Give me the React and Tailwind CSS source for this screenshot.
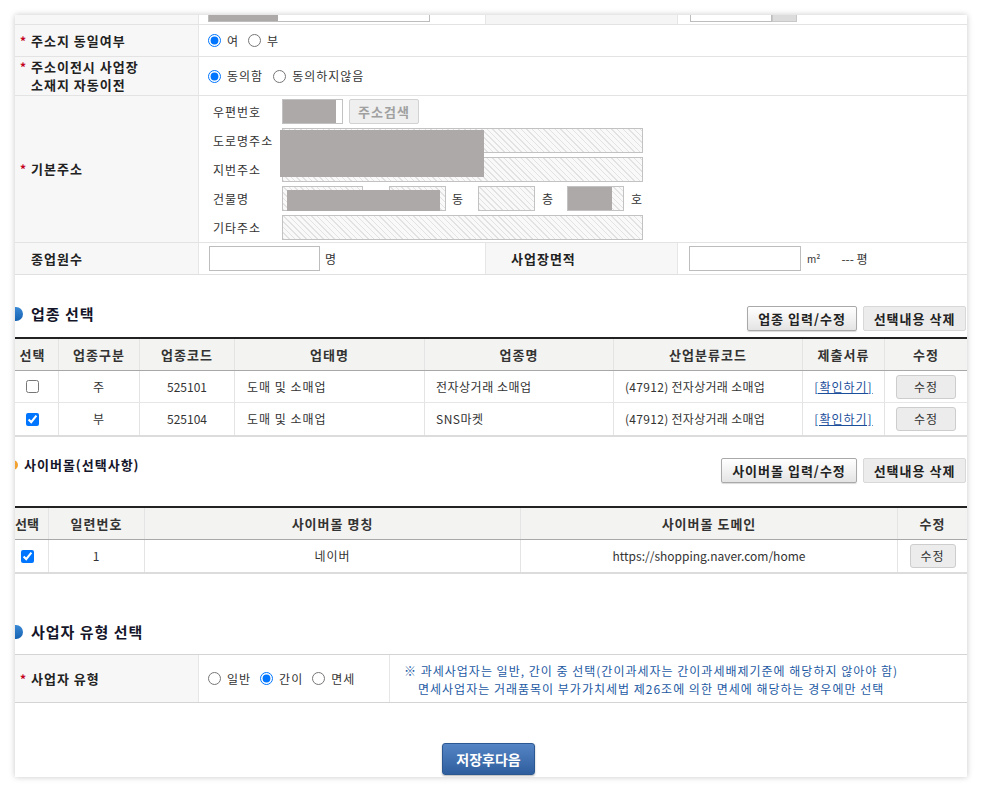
import React from 'react';

const FONT = "font-['Noto_Sans_CJK_KR','Noto_Sans',sans-serif]";
const HATCH =
  "bg-[repeating-linear-gradient(45deg,#e2e2e2_0px,#e2e2e2_1px,#f9f9f9_1px,#f9f9f9_4px)]";
const REDACT = 'bg-[#ada9a9]';

function Label({ children, star = true, className = '' }) {
  return (
    <div className={`flex items-center border-r border-[#e6e6e6] bg-[#f7f7f7] pl-[5px] ${className}`}>
      <div className="flex items-start">
        <span className="w-[11px] text-[12px] font-bold leading-[18px] tracking-normal text-[#c4001e]">{star ? '*' : ''}</span>
        <div className="text-[13px] font-bold leading-[18px] text-[#222]">{children}</div>
      </div>
    </div>
  );
}

function Radio({ label, checked, name }) {
  return (
    <label className="flex items-center gap-[6px]">
      <input type="radio" name={name} defaultChecked={checked} className="m-0 h-[13px] w-[13px]" />
      <span className="text-[12px] leading-[16px] text-[#333]">{label}</span>
    </label>
  );
}

function Hatch({ className = '', children }) {
  return (
    <div className={`flex h-[25px] border border-[#c2c2c2] ${HATCH} ${className}`}>{children}</div>
  );
}

function SubRow({ label, children }) {
  return (
    <div className="flex h-[25px] items-center">
      <span className="w-[69px] text-[12px] leading-[16px] text-[#333]">{label}</span>
      {children}
    </div>
  );
}

function Bullet({ color = 'blue' }) {
  if (color === 'orange') {
    return <span className="ml-[-7px] inline-block h-[10px] w-[10px] rounded-full bg-[#f2a230]" />;
  }
  return (
    <span className="ml-[-6px] inline-block h-[14px] w-[14px] rounded-full bg-[linear-gradient(#3b8ad6,#1561b0)]" />
  );
}

function GrayBtn({ children, className = '' }) {
  return (
    <button
      className={`h-[25px] rounded-[2px] border border-[#a9a9a9] bg-[linear-gradient(#ffffff,#e4e4e4)] text-[13px] font-bold leading-[23px] text-[#222] shadow-[0_1px_1px_rgba(0,0,0,0.15)] ${className}`}
    >
      {children}
    </button>
  );
}

function FlatBtn({ children, className = '' }) {
  return (
    <button
      className={`h-[25px] rounded-[2px] border border-[#d8d8d8] bg-[#ececec] text-[13px] font-bold leading-[23px] text-[#222] ${className}`}
    >
      {children}
    </button>
  );
}

function EditBtn({ className = '' }) {
  return (
    <button
      className={`h-[24px] rounded-[3px] border border-[#cdcdcd] bg-[#ececec] text-[12px] leading-[22px] text-[#333] ${className}`}
    >
      수정
    </button>
  );
}

const COLS1 = 'grid grid-cols-[44px_81px_95px_190px_189px_189px_82px_1fr]';
const COLS2 = 'grid grid-cols-[34px_96px_376px_377px_1fr]';

function Cell({ children, last, className = '' }) {
  return (
    <div className={`flex items-center whitespace-nowrap ${last ? '' : 'border-r border-[#e4e4e4]'} ${className}`}>{children}</div>
  );
}

export default function App() {
  const bizHeaders = ['선택', '업종구분', '업종코드', '업태명', '업종명', '산업분류코드', '제출서류', '수정'];
  const bizRows = [
    { checked: false, kind: '주', code: '525101', type: '도매 및 소매업', name: '전자상거래 소매업' },
    { checked: true, kind: '부', code: '525104', type: '도매 및 소매업', name: 'SNS마켓' },
  ];
  const mallHeaders = ['선택', '일련번호', '사이버몰 명칭', '사이버몰 도메인', '수정'];

  return (
    <div className={`min-h-screen bg-white px-[15px] pt-[15px] ${FONT} tracking-[1px] text-[#333]`}>
      <div className="h-[762px] overflow-hidden bg-white shadow-[0_0_6px_rgba(0,0,0,0.22)]">
        {/* partially visible top row */}
        <div className="mt-[-22px] grid h-[32px] grid-cols-[184px_287px_192px_1fr] border-b border-[#e3e3e3]">
          <div className="border-r border-[#e6e6e6] bg-[#f7f7f7]" />
          <div className="border-r border-[#e6e6e6] pl-[9px] pt-[4px]">
            <div className="flex h-[25px] w-[222px] border border-[#bdbdbd] bg-white">
              <div className={`w-[69px] ${REDACT}`} />
            </div>
          </div>
          <div className="border-r border-[#e6e6e6] bg-[#f5f5f5]" />
          <div className="flex items-start pl-[12px] pt-[4px]">
            <div className="h-[25px] w-[82px] border border-[#bdbdbd] bg-white" />
            <div className="h-[25px] w-[25px] border border-[#c8c8c8] bg-[#dcdcdc]" />
          </div>
        </div>

        {/* 주소지 동일여부 */}
        <div className="grid h-[32px] grid-cols-[184px_1fr] border-b border-[#e3e3e3]">
          <Label>주소지 동일여부</Label>
          <div className="flex items-center gap-[9px] pl-[9px]">
            <Radio name="same" label="여" checked />
            <Radio name="same" label="부" />
          </div>
        </div>

        {/* 주소이전시 */}
        <div className="grid h-[39px] grid-cols-[184px_1fr] border-b border-[#e3e3e3]">
          <Label>
            <div>주소이전시 사업장</div>
            <div>소재지 자동이전</div>
          </Label>
          <div className="flex items-center gap-[10px] pl-[9px]">
            <Radio name="move" label="동의함" checked />
            <Radio name="move" label="동의하지않음" />
          </div>
        </div>

        {/* 기본주소 */}
        <div className="grid h-[147px] grid-cols-[184px_1fr] border-b border-[#e3e3e3]">
          <Label>기본주소</Label>
          <div className="relative flex flex-col gap-[4px] pl-[14px] pt-[3px]">
            <SubRow label="우편번호">
              <div className="flex h-[25px] w-[61px] border border-[#c2c2c2] bg-white">
                <div className={`w-[53px] ${REDACT}`} />
              </div>
              <button className="ml-[6px] h-[25px] w-[70px] rounded-[2px] border border-[#d2d2d2] bg-[#efefef] text-[13px] font-bold leading-[23px] text-[#a0a0a0]">
                주소검색
              </button>
            </SubRow>
            <SubRow label="도로명주소">
              <Hatch className="w-[361px]" />
            </SubRow>
            <SubRow label="지번주소">
              <Hatch className="w-[361px]" />
            </SubRow>
            <SubRow label="건물명">
              <Hatch className="w-[81px]" />
              <Hatch className="ml-[26px] w-[57px]" />
              <span className="ml-[6px] text-[12px] leading-[16px]">동</span>
              <Hatch className="ml-[14px] w-[57px]" />
              <span className="ml-[7px] text-[12px] leading-[16px]">층</span>
              <Hatch className="ml-[13px] w-[57px]">
                <div className={`w-[44px] ${REDACT}`} />
              </Hatch>
              <span className="ml-[7px] text-[12px] leading-[16px]">호</span>
            </SubRow>
            <SubRow label="기타주소">
              <Hatch className="w-[361px]" />
            </SubRow>
            <div className={`absolute left-[81px] top-[34px] h-[47px] w-[204px] ${REDACT}`} />
            <div className={`absolute left-[88px] top-[94px] h-[21px] w-[153px] ${REDACT}`} />
          </div>
        </div>

        {/* 종업원수 / 사업장면적 */}
        <div className="grid h-[32px] grid-cols-[184px_287px_192px_1fr] border-b border-[#e0e0e0]">
          <Label star={false}>종업원수</Label>
          <div className="flex items-center border-r border-[#e6e6e6] pl-[10px]">
            <div className="h-[25px] w-[111px] border border-[#bdbdbd] bg-white" />
            <span className="ml-[5px] text-[12px] leading-[16px]">명</span>
          </div>
          <div className="flex items-center border-r border-[#e6e6e6] bg-[#f7f7f7] pl-[25px] text-[13px] font-bold text-[#222]">
            사업장면적
          </div>
          <div className="flex items-center pl-[11px]">
            <div className="h-[25px] w-[112px] border border-[#bdbdbd] bg-white" />
            <span className="ml-[6px] text-[10px] leading-[14px] tracking-normal">m²</span>
            <span className="ml-[21px] text-[12px] leading-[16px] tracking-normal">--- 평</span>
          </div>
        </div>

        {/* 업종 선택 */}
        <div className="mt-[29px] flex items-start justify-between pr-[1px]">
          <div className="flex h-[20px] items-center">
            <Bullet />
            <span className="ml-[8px] text-[15px] font-bold leading-[20px] text-[#15152a]">업종 선택</span>
          </div>
          <div className="flex gap-[6px] pt-[2px]">
            <GrayBtn className="w-[110px]">업종 입력/수정</GrayBtn>
            <FlatBtn className="w-[103px]">선택내용 삭제</FlatBtn>
          </div>
        </div>

        <div className="mt-[6px] border-b-2 border-t-2 border-b-[#dcdcdc] border-t-[#222]">
          <div className={`${COLS1} h-[32px] border-b border-[#a8a8a8] bg-[#f3f3f1] text-[13px] font-bold text-[#333]`}>
            {bizHeaders.map((h, i) => (
              <Cell key={h} last={i === 7} className={`justify-center ${i === 0 ? 'pr-[8px]' : ''}`}>
                {h}
              </Cell>
            ))}
          </div>
          {bizRows.map((r, idx) => (
            <div
              key={r.code}
              className={`${COLS1} h-[32px] text-[12px] text-[#333] ${idx === 0 ? 'border-b border-[#e6e6e6]' : ''}`}
            >
              <Cell className="justify-center pr-[8px]">
                <input type="checkbox" defaultChecked={r.checked} className="m-0 h-[13px] w-[13px]" />
              </Cell>
              <Cell className="justify-center">{r.kind}</Cell>
              <Cell className="justify-center tracking-normal">{r.code}</Cell>
              <Cell className="pl-[12px]">{r.type}</Cell>
              <Cell className="pl-[11px] tracking-[0.5px]">{r.name}</Cell>
              <Cell className="pl-[11px] tracking-[0.3px]">(47912) 전자상거래 소매업</Cell>
              <Cell className="justify-center">
                <a className="text-[#1b4f9b] underline">[확인하기]</a>
              </Cell>
              <Cell last className="justify-center">
                <EditBtn className="w-[60px]" />
              </Cell>
            </div>
          ))}
        </div>

        {/* 사이버몰 */}
        <div className="mt-[21px] flex items-start justify-between pr-[1px]">
          <div className="flex h-[14px] items-center">
            <Bullet color="orange" />
            <span className="ml-[6px] text-[13px] font-bold leading-[14px] text-[#15152a]">사이버몰(선택사항)</span>
          </div>
          <div className="flex gap-[6px]">
            <GrayBtn className="w-[136px]">사이버몰 입력/수정</GrayBtn>
            <FlatBtn className="w-[103px]">선택내용 삭제</FlatBtn>
          </div>
        </div>

        <div className="mt-[23px] border-b-2 border-t-2 border-b-[#dcdcdc] border-t-[#222]">
          <div className={`${COLS2} h-[32px] border-b border-[#a8a8a8] bg-[#f3f3f1] text-[13px] font-bold text-[#333]`}>
            {mallHeaders.map((h, i) => (
              <Cell key={h} last={i === 4} className={i === 0 ? 'justify-start tracking-normal' : 'justify-center'}>
                {h}
              </Cell>
            ))}
          </div>
          <div className={`${COLS2} h-[32px] text-[12px] text-[#333]`}>
            <Cell className="justify-center pr-[8px]">
              <input type="checkbox" defaultChecked className="m-0 h-[13px] w-[13px]" />
            </Cell>
            <Cell className="justify-center">1</Cell>
            <Cell className="justify-center">네이버</Cell>
            <Cell className="justify-center tracking-normal">https://shopping.naver.com/home</Cell>
            <Cell last className="justify-center">
              <EditBtn className="w-[46px]" />
            </Cell>
          </div>
        </div>

        {/* 사업자 유형 선택 */}
        <div className="mt-[48px] flex h-[20px] items-center">
          <Bullet />
          <span className="ml-[8px] text-[15px] font-bold leading-[20px] text-[#15152a]">사업자 유형 선택</span>
        </div>

        <div className="mt-[12px] grid h-[49px] grid-cols-[184px_191px_1fr] border-b border-t border-[#d4d4d4]">
          <Label>사업자 유형</Label>
          <div className="flex items-center gap-[9px] border-r border-[#e6e6e6] pl-[9px]">
            <Radio name="type" label="일반" />
            <Radio name="type" label="간이" checked />
            <Radio name="type" label="면세" />
          </div>
          <div className="pl-[14px] pt-[7px] text-[12px] leading-[18px] text-[#1d5aa3]">
            <div>※ 과세사업자는 일반, 간이 중 선택(간이과세자는 간이과세배제기준에 해당하지 않아야 함)</div>
            <div className="pl-[14px]">면세사업자는 거래품목이 부가가치세법 제26조에 의한 면세에 해당하는 경우에만 선택</div>
          </div>
        </div>

        <div className="mt-[40px] flex justify-center pr-[5px]">
          <button className="h-[32px] w-[93px] rounded-[3px] border border-[#2c5891] bg-[linear-gradient(#5585c4,#2e5e9d)] text-[14px] font-bold tracking-normal text-white shadow-[0_1px_2px_rgba(0,0,0,0.3)]">
            저장후다음
          </button>
        </div>
      </div>
    </div>
  );
}
